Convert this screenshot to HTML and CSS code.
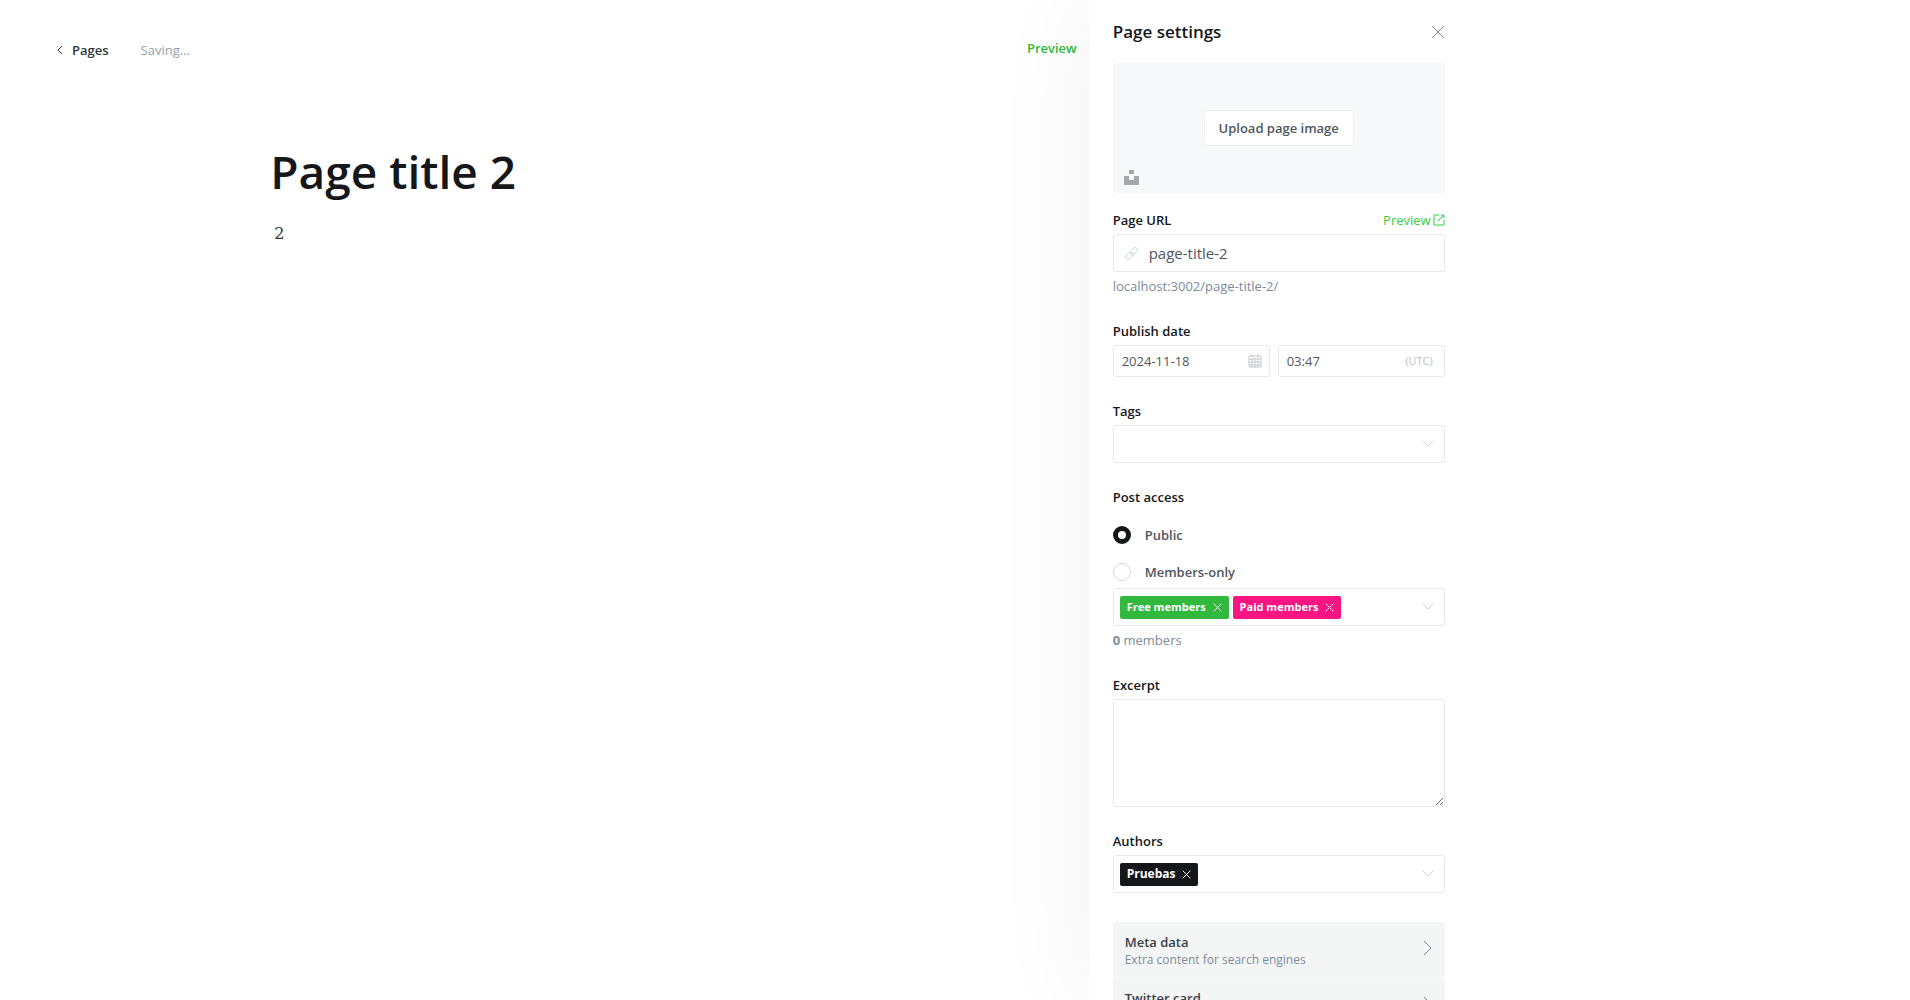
FILE: index.html
```html
<!DOCTYPE html>
<html lang="en">
<head>
<meta charset="utf-8">
<title>Page title 2</title>
<link rel="stylesheet" href="styles.css">
</head>
<body>
<svg class="defs" aria-hidden="true">
  <symbol id="close" viewBox="0 0 14 14"><path d="M1 1l12 12M13 1L1 13"/></symbol>
  <symbol id="down" viewBox="0 0 12 8"><path d="M1 1l5 5 5-5"/></symbol>
  <symbol id="right" viewBox="0 0 10 16"><path d="M1 1l7 7-7 7"/></symbol>
</svg>
<div class="app">
  <main class="editor">
    <header class="editor-header">
      <a class="back" href="#"><svg class="back-icon" viewBox="0 0 6 10"><path d="M5 1L1 5l4 4"/></svg>Pages</a>
      <span class="status">Saving...</span>
      <button class="preview" type="button">Preview</button>
    </header>
    <article class="document">
      <h1>Page title 2</h1>
      <p>2</p>
    </article>
  </main>
  <aside class="panel">
    <div class="settings">
      <header class="settings-header">
        <h2>Page settings</h2>
        <button class="close" type="button" aria-label="Close"><svg class="close-icon"><use href="#close"/></svg></button>
      </header>
      <div class="uploader">
        <button class="upload" type="button">Upload page image</button>
        <button class="unsplash" type="button" aria-label="Unsplash"><svg viewBox="0 0 15 15"><path d="M5 0h5v4H5zM0 6h5v4h5V6h5v9H0z"/></svg></button>
      </div>
      <form>
        <div class="field">
          <div class="label-row">
            <label for="url">Page URL</label>
            <a class="view" href="#">Preview <svg class="view-icon" viewBox="0 0 12 12"><path d="M6 1H1v10h10V6M8 1h3v3M11 1L5 7"/></svg></a>
          </div>
          <div class="box">
            <svg class="link-icon" viewBox="0 0 14 14"><g transform="rotate(-45 7 7)"><rect x="-1" y="4.500" width="9" height="5" rx="2.500"/><rect x="6" y="4.500" width="9" height="5" rx="2.500"/></g></svg>
            <input class="url-input" id="url" type="text" value="page-title-2">
          </div>
          <p class="help">localhost:3002/page-title-2/</p>
        </div>
        <div class="field">
          <div class="label-row"><label for="date">Publish date</label></div>
          <div class="date-row">
            <div class="box small">
              <input id="date" type="text" value="2024-11-18">
              <svg class="calendar-icon" viewBox="0 0 14 14"><path d="M1 2h12v11H1zM1 5h12M1 8h12M1 11h12M4 4v9M7 4v9M10 4v9M4 0v3M10 0v3"/></svg>
            </div>
            <div class="box small time">
              <input type="text" value="03:47" aria-label="Publish time">
              <span class="zone">(UTC)</span>
            </div>
          </div>
        </div>
        <div class="field">
          <div class="label-row"><label for="tags">Tags</label></div>
          <div class="box select"><input id="tags" type="text"><svg class="down-icon"><use href="#down"/></svg></div>
        </div>
        <fieldset class="field">
          <legend>Post access</legend>
          <label class="radio"><input type="radio" name="access" checked>Public</label>
          <label class="radio"><input type="radio" name="access">Members-only</label>
          <div class="box select">
            <span class="token free">Free members<button type="button" aria-label="Remove Free members"><svg><use href="#close"/></svg></button></span>
            <span class="token paid">Paid members<button type="button" aria-label="Remove Paid members"><svg><use href="#close"/></svg></button></span>
            <input type="text" aria-label="Member segments"><svg class="down-icon"><use href="#down"/></svg>
          </div>
          <p class="help"><strong>0</strong> members</p>
        </fieldset>
        <div class="field">
          <div class="label-row"><label for="excerpt">Excerpt</label></div>
          <textarea id="excerpt"></textarea>
        </div>
        <div class="field">
          <div class="label-row"><label for="authors">Authors</label></div>
          <div class="box select">
            <span class="token author">Pruebas<button type="button" aria-label="Remove Pruebas"><svg><use href="#close"/></svg></button></span>
            <input id="authors" type="text"><svg class="down-icon"><use href="#down"/></svg>
          </div>
        </div>
      </form>
      <nav class="more">
        <button type="button"><span><b>Meta data</b><small>Extra content for search engines</small></span><svg><use href="#right"/></svg></button>
        <button type="button"><span><b>Twitter card</b></span><svg><use href="#right"/></svg></button>
      </nav>
    </div>
  </aside>
</div>
</body>
</html>
```
FILE: styles.css
```css
* { box-sizing: border-box; }
body {
  margin: 0;
  overflow: hidden;
  background: #fff;
  color: #15171a;
  font: 13px/20px "Segoe UI", "Open Sans", "Noto Sans", sans-serif;
}
h1, h2, p { margin: 0; }
button, input, textarea { font: inherit; color: inherit; }
button { padding: 0; border: 0; background: none; cursor: pointer; }
a { color: inherit; text-decoration: none; }
svg { display: block; flex: none; fill: none; stroke: currentColor; }
.defs { display: none; }

.app { display: grid; grid-template-columns: 57% 43%; height: 100vh; }

.editor-header {
  display: flex;
  align-items: center;
  gap: 32px;
  padding: 38px 12px 0 57px;
}
.back { display: flex; align-items: center; gap: 9px; color: #30373d; font-weight: 600; }
.back-icon { width: 6px; height: 10px; }
.status { color: #95a1ad; }
.preview { margin-left: auto; padding-bottom: 4px; color: #30b93c; font-weight: 600; }
.document { max-width: 548px; margin: 75px auto 0; }
.document h1 { font-size: 46px; line-height: 68px; font-weight: 600; }
.document p {
  padding: 18px 4px;
  color: #30373d;
  font: 16px/22px Georgia, "DejaVu Serif", serif;
}

.panel {
  overflow: hidden;
  height: 100vh;
  padding: 20px 24px 0;
  background: #fff;
  box-shadow: 0 0 100px rgba(0, 0, 0, .06);
}
.settings { max-width: 332px; }
.settings-header { display: flex; justify-content: space-between; align-items: center; height: 24px; }
h2 { font-size: 17px; line-height: 24px; font-weight: 600; }
.close { color: #8e9499; }
.close-icon { width: 14px; height: 14px; }

.uploader {
  position: relative;
  display: grid;
  place-items: center;
  height: 130px;
  margin: 19px 0 17px;
  border-radius: 3px;
  background: #f6f8fa;
}
.upload {
  padding: 7px 14px;
  border-radius: 3px;
  background: #fff;
  box-shadow: 0 0 2px rgba(0, 0, 0, .12);
  color: #50575e;
  font-weight: 600;
}
.unsplash { position: absolute; left: 11px; bottom: 8px; color: #a5a7a9; }
.unsplash svg { width: 15px; height: 15px; fill: currentColor; stroke: none; }

.field { min-width: 0; margin: 0 0 24px; padding: 0; border: 0; }
.label-row { display: flex; justify-content: space-between; height: 24px; }
.label-row label, legend { padding: 0; font-weight: 600; }
.view { display: flex; align-items: center; gap: 2px; height: 20px; color: #30cf43; }
.view-icon { width: 12px; height: 12px; }
.box {
  display: flex;
  align-items: center;
  height: 38px;
  padding: 0 11px;
  border: 1px solid #e6e9eb;
  border-radius: 3px;
  color: #50575e;
}
.box input {
  flex: 1;
  min-width: 0;
  padding: 0;
  border: 0;
  outline: 0;
  background: none;
}
.box .url-input { margin-left: 11px; font-size: 15px; }
.link-icon { width: 13px; height: 13px; color: #ccd2d7; }
.help { padding: 4px 0 1px; color: #7c8b9a; }
.date-row { display: flex; gap: 8px; }
.date-row .box { flex: 0 0 157px; min-width: 0; }
.date-row .time { flex: 1; }
.date-row .small { height: 32px; padding-left: 8px; }
.calendar-icon { width: 14px; height: 14px; margin-right: -4px; color: #c2c9cf; }
.zone { color: #b9c0c7; font-size: 11px; }
.select { gap: 4px; padding: 0 10px 0 6px; }
.down-icon { width: 12px; height: 8px; color: #ced4d9; }

legend { margin-bottom: 18px; }
.radio {
  display: flex;
  align-items: center;
  gap: 14px;
  height: 20px;
  margin-bottom: 17px;
  color: #50575e;
  font-weight: 600;
}
.radio + .box { margin-top: -11px; }
.radio input {
  appearance: none;
  width: 18px;
  height: 18px;
  margin: 0;
  border: 1px solid #d3d9de;
  border-radius: 50%;
}
.radio input:checked { border: 5px solid #15171a; }

.token {
  display: flex;
  align-items: center;
  gap: 7px;
  height: 23px;
  padding: 0 7px;
  border-radius: 2px;
  color: #fff;
  font-size: 11px;
  font-weight: 700;
}
.token svg { width: 9px; height: 9px; stroke-width: 1.5; }
.free { background: #30b93c; }
.paid { background: #fb1582; }
.author { background: #15171a; font-size: 12px; }

textarea {
  display: block;
  width: 100%;
  height: 108px;
  padding: 8px;
  border: 1px solid #e6e9eb;
  border-radius: 3px;
  resize: vertical;
}
.more { margin-top: 29px; border-radius: 3px; background: #f4f6f6; }
.more button {
  display: flex;
  justify-content: space-between;
  width: 100%;
  height: 56px;
  padding: 12px 12px 0;
  border-bottom: 1px solid #fafbfb;
  text-align: left;
}
.more b, .more small { display: block; line-height: 17px; }
.more b { color: #394047; font-weight: 600; }
.more small { color: #7c8b9a; font-size: 12px; }
.more svg { width: 10px; height: 16px; margin-top: 6px; color: #7c8b9a; }
```
